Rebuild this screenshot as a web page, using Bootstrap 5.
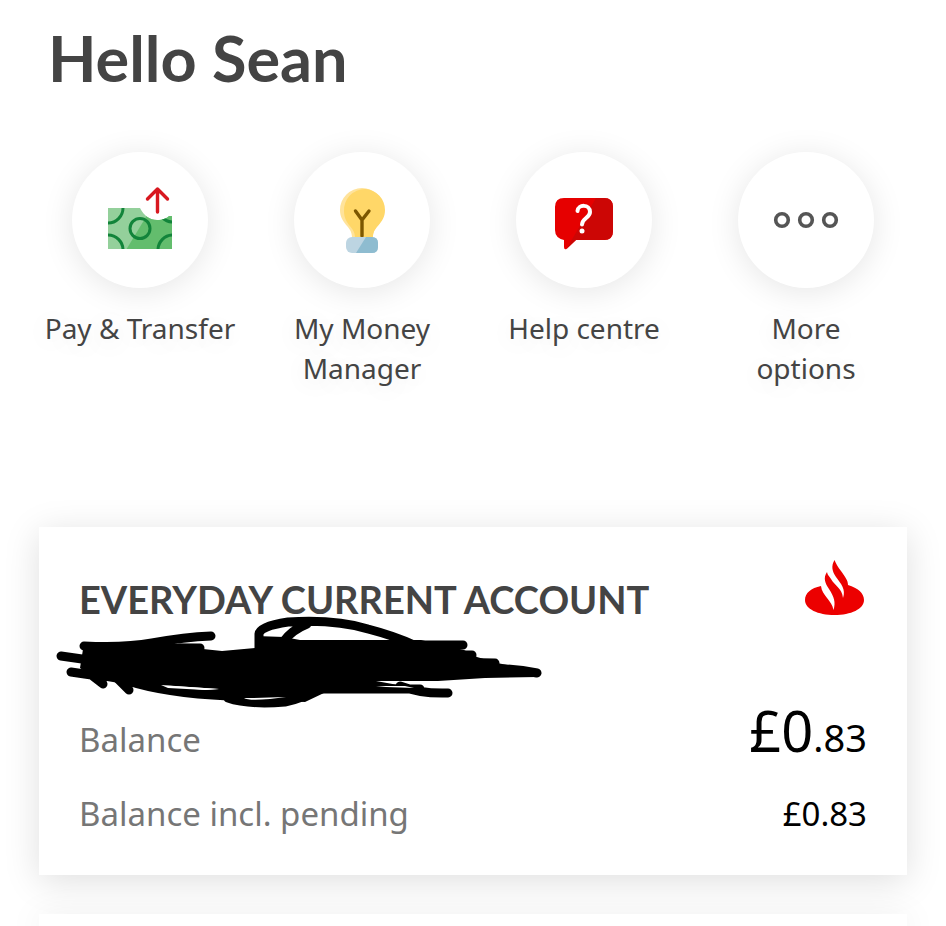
<!DOCTYPE html>
<html lang="en">
<head>
<meta charset="utf-8">
<meta name="viewport" content="width=device-width, initial-scale=1">
<title>Accounts</title>
<link href="https://cdn.jsdelivr.net/npm/bootstrap@5.3.0/dist/css/bootstrap.min.css" rel="stylesheet">
<style>
body { font-family: "Noto Sans", sans-serif; color: #444; background: #fff; overflow-x: hidden; }
.greeting { font: 700 63px/80px Lato, sans-serif; padding: 18px 48px 0; margin-bottom: 54px; }
.quick-row { padding: 0 29px; }
.tile { background: none; border: 0; padding: 0; color: #444; font-size: 28px; line-height: 40px; }
.tile-disc { width: 136px; height: 136px; border-radius: 50%; background: #fff; box-shadow: 0 4px 32px rgba(0,0,0,.1); margin-bottom: 20px; }
.tile-text { max-width: 200px; text-shadow: 0 4px 24px rgba(0,0,0,.1); }
.tile-text.narrow { max-width: 150px; }
.accounts { padding: 0 39px; margin-top: 139px; gap: 39px; }
.account { background: #fff; padding: 33px 40px 32px; box-shadow: 0 6px 34px rgba(0,0,0,.13); }
.account-next { background: #fff; min-height: 12px; box-shadow: 0 6px 34px rgba(0,0,0,.13); }
.account-name { font: 700 38px/48px Lato, sans-serif; padding-top: 15px; }
.number-row { height: 78px; }
.scribble { position: absolute; left: -29px; top: -13px; width: 500px; height: 105px; pointer-events: none; }
.line-label { color: #767676; font-size: 33px; line-height: 58px; }
.line-value { color: #000; font-size: 33px; line-height: 58px; }
.pounds { font-size: 56px; }
.pence { font-size: 38px; }
</style>
</head>
<body>
<main>
  <h1 class="greeting">Hello Sean</h1>

  <nav class="quick-row" aria-label="Quick actions">
    <div class="row g-0">
      <div class="col-3 d-flex justify-content-center align-items-start">
        <button type="button" class="tile d-flex flex-column align-items-center">
          <span class="tile-disc d-flex">
            <svg width="136" height="136" viewBox="0 0 136 136" aria-hidden="true">
              <defs><clipPath id="note"><path d="M36 56H68C72 64 78 68 85 68C91 68 95 66 97 64H100V97H36Z"/></clipPath></defs>
              <g clip-path="url(#note)">
                <path fill="#94d09b" d="M36 55H101V98H36Z"/>
                <path fill="#63bd6d" d="M80 55H101V98H54Z"/>
                <g fill="none" stroke="#12843a" stroke-width="3"><circle cx="68" cy="76.500" r="10"/><circle cx="36" cy="56" r="15"/><circle cx="36" cy="98" r="15"/><circle cx="101" cy="98" r="15"/><circle cx="101" cy="55" r="15"/></g>
              </g>
              <path d="M85.500 60V37M75.500 47L85.500 37L95.500 47" fill="none" stroke="#d81820" stroke-width="3.400" stroke-linecap="round" stroke-linejoin="round"/>
            </svg>
          </span>
          <span class="tile-text text-nowrap">Pay &amp; Transfer</span>
        </button>
      </div>
      <div class="col-3 d-flex justify-content-center align-items-start">
        <button type="button" class="tile d-flex flex-column align-items-center">
          <span class="tile-disc d-flex">
            <svg width="136" height="136" viewBox="0 0 136 136" aria-hidden="true">
              <path fill="#ffe39b" d="M68 36A22 22 0 0 0 46 58C46 72 58 74 58 85H79C79 74 90 72 90 58A22 22 0 0 0 68 36Z"/>
              <path fill="#ffd768" d="M71 37A21 21 0 0 0 50 59C50 73 61 75 61 85H79C79 74 91 72 91 58A21 21 0 0 0 71 37Z"/>
              <path d="M68 84V67M68 68L61.500 59M68 68L75 59" fill="none" stroke="#7d5700" stroke-width="3.400" stroke-linecap="round"/>
              <rect x="52" y="85" width="32" height="16" rx="6" fill="#bdd5e2"/>
              <path fill="#8ebcd0" d="M72 85H78Q84 85 84 91V95Q84 101 78 101H62Z"/>
            </svg>
          </span>
          <span class="tile-text narrow">My Money Manager</span>
        </button>
      </div>
      <div class="col-3 d-flex justify-content-center align-items-start">
        <button type="button" class="tile d-flex flex-column align-items-center">
          <span class="tile-disc d-flex">
            <svg width="136" height="136" viewBox="0 0 136 136" aria-hidden="true">
              <path fill="#e60000" d="M48 46H88Q97 46 97 55V79Q97 88 88 88H60L50.500 97Q48 98 48 95V88Q39 86 39 78V55Q39 46 48 46Z"/>
              <path fill="#cc0605" d="M80 46H88Q97 46 97 55V79Q97 88 88 88H60L50.500 97Z"/>
              <path d="M61.500 59C62 52 74 52 74 60C74 66 66 66 66 72.500" fill="none" stroke="#fff" stroke-width="4" stroke-linecap="round"/>
              <circle cx="66" cy="79" r="2.500" fill="#fff"/>
            </svg>
          </span>
          <span class="tile-text text-nowrap">Help centre</span>
        </button>
      </div>
      <div class="col-3 d-flex justify-content-center align-items-start">
        <button type="button" class="tile d-flex flex-column align-items-center">
          <span class="tile-disc d-flex">
            <svg width="136" height="136" viewBox="0 0 136 136" aria-hidden="true">
              <g fill="none" stroke="#555" stroke-width="3.600"><circle cx="44" cy="68" r="6.300"/><circle cx="68" cy="68" r="6.300"/><circle cx="92" cy="68" r="6.300"/></g>
            </svg>
          </span>
          <span class="tile-text narrow">More options</span>
        </button>
      </div>
    </div>
  </nav>

  <div class="accounts d-flex flex-column">
    <section class="account position-relative">
      <div class="d-flex justify-content-between align-items-start">
        <h2 class="account-name mb-0">EVERYDAY CURRENT ACCOUNT</h2>
        <svg width="62" height="56" viewBox="0 0 62 56" role="img" aria-label="Santander">
          <path fill="#ec0000" d="M16 26C6 28 0 33 0 40C0 49 13 55 29.500 55C46 55 59 49 59 40C59 33 53 28 43 25C43 20 40 17 36 11C33 7 31 4 29.500 0C26 6 27 11 31 17C36 24 41 29 38 38C37 28 30 26 26 19C24 16 22.500 15 22 12C18 18 20 23 24 29C29 37 31 42 28.500 50C27 40 17 36 16 26Z"/>
        </svg>
      </div>
      <div class="number-row position-relative">
        <svg class="scribble" viewBox="50 610 500 105" role="img" aria-label="Account number hidden">
          <path fill="#000" d="M84 643L130 643L198 644L203 649L222 651L255 648L256 636L284 637L300 640H421L464 650L477 657L497 663L537 671L537 677L485 678L438 681L376 681L420 689V692L326 692L305 702L240 698L215 698L180 694L150 687L125 684L95 679L80 668Z"/>
          <path fill="#fff" d="M158 685L219 689L205 690L165 688Z"/>
          <g fill="none" stroke="#000" stroke-width="9" stroke-linecap="round" stroke-linejoin="round">
            <path d="M61 656L96 661M71 672L105 677M84 646Q125 648 152 643Q185 637 211 636M90 674L103 684M116 677L129 690M128 681Q165 693 228 696"/>
            <path d="M259 648V634Q260 626 288 622Q335 619 368 629Q395 636 414 645M284 641Q292 630 307 624M340 645H463M400 655H472M440 662L495 663M490 669Q515 668 537 673"/>
            <path d="M228 698Q248 705 285 702Q302 699 318 689H420M400 686Q421 694 448 693M200 648Q190 648 180 648"/>
          </g>
          <path fill="#fff" d="M161 685L219 689L205 690L168 688ZM244 698Q262 698 286 697L270 699Q248 701 244 698ZM376 686L405 686L414 688L386 687Z"/>
        </svg>
      </div>
      <div class="d-flex justify-content-between align-items-baseline">
        <span class="line-label">Balance</span>
        <span class="line-value"><span class="pounds">£0</span><span class="pence">.83</span></span>
      </div>
      <div class="d-flex justify-content-between align-items-baseline mt-3">
        <span class="line-label">Balance incl. pending</span>
        <span class="line-value">£0.83</span>
      </div>
    </section>
    <section class="account-next" aria-label="Next account"></section>
  </div>
</main>
<script src="https://cdn.jsdelivr.net/npm/bootstrap@5.3.0/dist/js/bootstrap.bundle.min.js"></script>
</body>
</html>
